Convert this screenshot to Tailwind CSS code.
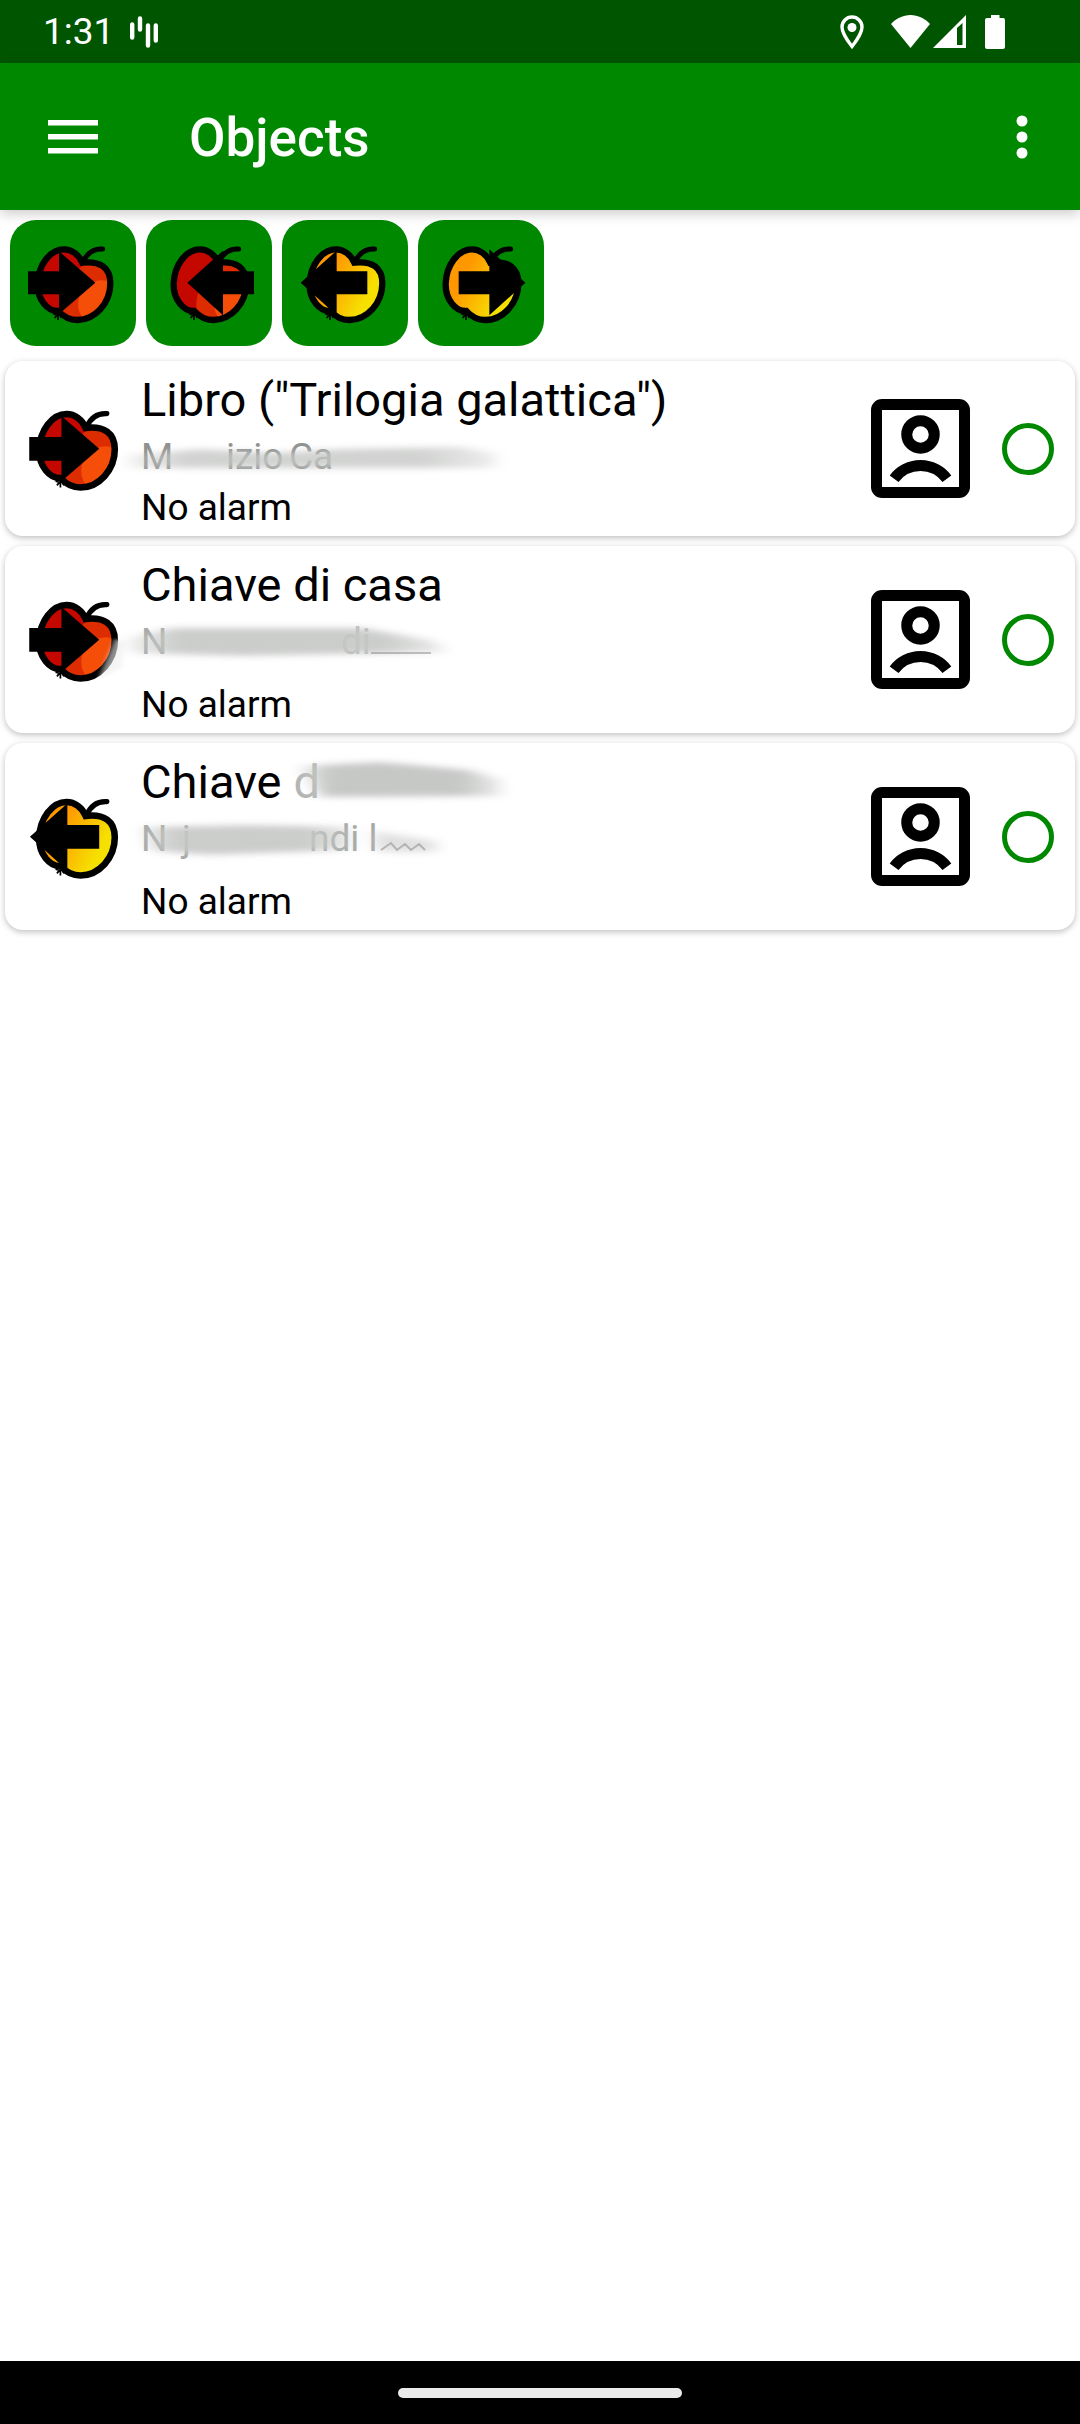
<!doctype html>
<html lang="en">
<head>
  <meta charset="UTF-8" />
  <meta name="viewport" content="width=device-width, initial-scale=1.0" />
  <title>Objects</title>
  <script src="https://cdn.jsdelivr.net/npm/@tailwindcss/browser@4"></script>
</head>
<body class="bg-white text-black font-['Roboto',sans-serif]">

<!-- Shared shapes -->
<svg class="absolute size-0" aria-hidden="true">
  <defs>
    <linearGradient id="gold" x1="0" y1="0" x2="1" y2="0.5">
      <stop offset="0.35" stop-color="#ff9800" />
      <stop offset="0.9" stop-color="#f6e000" />
    </linearGradient>
    <linearGradient id="smudge" x1="0" y1="0" x2="1" y2="0">
      <stop offset="0" stop-color="#c6c8c6" stop-opacity="0.3" />
      <stop offset="0.15" stop-color="#c6c8c6" />
      <stop offset="0.8" stop-color="#c6c8c6" />
      <stop offset="1" stop-color="#c6c8c6" stop-opacity="0.4" />
    </linearGradient>
    <filter id="smear" x="-20%" y="-60%" width="140%" height="220%">
      <feGaussianBlur stdDeviation="8 3" />
    </filter>
    <path id="apple-shape" d="M247 158C237 134 215 118 192 118C150 118 115 165 113 220C111 270 145 305 175 303C190 320 208 330 232 330C285 330 331 280 331 220C331 172 300 152 247 158Z" />
    <clipPath id="apple-clip"><use href="#apple-shape" /></clipPath>
    <g id="apple-lines">
      <use href="#apple-shape" fill="none" stroke="#000" stroke-width="19" />
      <path d="M249 156C260 132 280 115 308 117" fill="none" stroke="#000" stroke-width="15" stroke-linecap="round" />
      <path d="M160 312l10 3M164 324l8-10M174 330v-20M184 324l-6-12M190 320l-8-10" stroke="#000" stroke-width="5" />
    </g>
    <g id="apple-red">
      <g clip-path="url(#apple-clip)">
        <path d="M80 90H360V350H80Z" fill="#dd2c00" />
        <path d="M80 90H210L252 165C205 195 175 240 182 310H80Z" fill="#c40800" />
        <circle cx="305" cy="282" r="71" fill="#f44e08" />
      </g>
      <use href="#apple-lines" />
    </g>
    <g id="apple-gold">
      <use href="#apple-shape" fill="url(#gold)" />
      <use href="#apple-lines" />
    </g>
    <g id="contact" fill="none" stroke="#000" stroke-width="2">
      <rect x="4" y="4" width="16" height="16" rx="1" />
      <circle cx="12" cy="9.45" r="2.5" />
      <path d="M7.2 17.5A6 6 0 0 1 16.8 17.5" />
    </g>
  </defs>
</svg>

<div class="flex flex-col min-h-screen">
  <!-- Status bar -->
  <div class="flex items-center justify-between h-[63px] bg-[#005500] text-white pl-[43px] pr-[75px]">
    <div class="flex items-center gap-4">
      <span class="text-[37px] leading-[44px]">1:31</span>
      <svg class="w-7 h-8" viewBox="0 0 28 32" stroke="#fff" stroke-width="4.4" stroke-linecap="round">
        <path d="M2.2 8.500V21.500M10 2.500V13.500M18 9.500V29.500M25.800 9.500V24.500" />
      </svg>
    </div>
    <div class="flex items-center">
      <svg class="w-6 h-[34px] mr-[27px]" viewBox="0 0 24 34" fill="none">
        <path d="M12 2C6.500 2 2 6.500 2 12C2 19 12 31.500 12 31.500S22 19 22 12C22 6.500 17.500 2 12 2Z" stroke="#fff" stroke-width="3.4" />
        <circle cx="12" cy="12.500" r="4.500" fill="#fff" />
      </svg>
      <svg class="w-[39px] h-[33px] mr-[3px]" viewBox="0 0 39 33" fill="#fff"><path d="M19.500 33L0 9C5 3.500 12 0 19.500 0S34 3.500 39 9Z" /></svg>
      <svg class="w-[33px] h-[33px] mr-[19px]" viewBox="0 0 33 33" fill="#fff"><path fill-rule="evenodd" d="M33 0V33H0ZM24 13V30H29.500V8Z" /></svg>
      <svg class="w-5 h-[34px]" viewBox="0 0 20 34" fill="#fff"><path d="M6 0H14.500V3H18Q20 3 20 5V32Q20 34 18 34H2Q0 34 0 32V5Q0 3 2 3H6Z" /></svg>
    </div>
  </div>

  <!-- App bar -->
  <header class="relative flex items-center h-[147px] bg-[#008800] text-white pl-12 pr-[52px] shadow-[0_4px_12px_rgba(0,0,0,0.2)]">
    <button type="button" aria-label="Open menu">
      <svg class="w-[50px] h-[34px]" viewBox="0 0 50 34" fill="#fff"><path d="M0 0H50V5.500H0ZM0 14H50V19.500H0ZM0 28H50V33.500H0Z" /></svg>
    </button>
    <h1 class="flex-1 ml-[91px] pt-[3px] text-[53px] leading-[64px] font-medium">Objects</h1>
    <button type="button" aria-label="More options">
      <svg class="w-3 h-[44px]" viewBox="0 0 12 44" fill="#fff">
        <circle cx="6" cy="6" r="5.500" /><circle cx="6" cy="22" r="5.500" /><circle cx="6" cy="38" r="5.500" />
      </svg>
    </button>
  </header>

  <main class="flex-1">
    <!-- Actions -->
    <div class="flex gap-[10px] px-[10px] pt-[10px] pb-[15px]">
      <button type="button" aria-label="Lend" class="p-3 rounded-[26px] bg-[#008800]">
        <svg class="size-[102px]" viewBox="66 66 306 306"><use href="#apple-red" /><path d="M84 184H177V124L286 218L177 312V253H84Z" /></svg>
      </button>
      <button type="button" aria-label="Lent object returned" class="p-3 rounded-[26px] bg-[#008800]">
        <svg class="size-[102px]" viewBox="66 66 306 306"><use href="#apple-red" /><path d="M354 184H261V122L154 218L261 316V253H354Z" /></svg>
      </button>
      <button type="button" aria-label="Borrow" class="p-3 rounded-[26px] bg-[#008800]">
        <svg class="size-[102px]" viewBox="66 66 306 306"><use href="#apple-gold" /><path d="M286 184H194V122L86 218L194 316V253H286Z" /></svg>
      </button>
      <button type="button" aria-label="Borrowed object returned" class="p-3 rounded-[26px] bg-[#008800]">
        <svg class="size-[102px]" viewBox="66 66 306 306"><use href="#apple-gold" /><path d="M152 184H244V118L352 218L244 316V253H152Z" /></svg>
      </button>
    </div>

    <!-- Objects -->
    <ul class="flex flex-col gap-[10px] px-[5px]">
      <li class="flex items-center pl-[18px] pr-[21px] rounded-[18px] bg-white shadow-[0_2px_6px_rgba(0,0,0,0.25)]">
        <svg class="size-[106px]" viewBox="66 66 306 306"><use href="#apple-red" /><path d="M84 184H177V124L286 218L177 312V253H84Z" /></svg>
        <div class="flex-1 ml-3 pt-[11px] pb-[7px]">
          <h2 class="text-[47px] leading-[56px] mb-[7px]">Libro ("Trilogia galattica")</h2>
          <svg class="w-[400px] h-[43px] mb-2 overflow-visible text-[37px]" viewBox="0 0 400 43" aria-label="Name hidden">
            <g fill="#8f928f"><text x="0" y="34">M</text><text x="85" y="34">izio</text><text x="148" y="34">Ca</text></g>
            <path d="M-12 20L60 14L130 18L200 14L320 12L354 18V33H-12Z" fill="url(#smudge)" opacity="0.8" filter="url(#smear)" />
          </svg>
          <p class="text-[37px] leading-[43px]">No alarm</p>
        </div>
        <svg class="size-[99px] mr-8" viewBox="3 3 18 18"><use href="#contact" /></svg>
        <input type="radio" name="object" aria-label="Select Libro" class="appearance-none size-[52px] rounded-full border-[5px] border-[#008800] checked:bg-[#008800]" />
      </li>

      <li class="flex items-center pl-[18px] pr-[21px] rounded-[18px] bg-white shadow-[0_2px_6px_rgba(0,0,0,0.25)]">
        <svg class="size-[106px] overflow-visible" viewBox="66 66 306 306">
          <use href="#apple-red" /><path d="M84 184H177V124L286 218L177 312V253H84Z" />
          <path d="M332 215L360 225L350 300L285 330Z" fill="#eee" opacity="0.6" filter="url(#smear)" />
        </svg>
        <div class="flex-1 ml-3 pt-[11px] pb-[7px]">
          <h2 class="text-[47px] leading-[56px] mb-[7px]">Chiave di casa</h2>
          <svg class="w-[400px] h-[43px] mb-5 overflow-visible text-[37px]" viewBox="0 0 400 43" aria-label="Name hidden">
            <g fill="#a5a8a5"><text x="0" y="34">N</text><text x="200" y="34" fill="#b8bab8">di</text></g>
            <path d="M-12 18L30 8L220 8L290 20L306 32L100 36L-12 33Z" fill="url(#smudge)" opacity="0.9" filter="url(#smear)" />
            <path d="M230 33H290" stroke="#888" stroke-width="2" opacity="0.5" />
          </svg>
          <p class="text-[37px] leading-[43px]">No alarm</p>
        </div>
        <svg class="size-[99px] mr-8" viewBox="3 3 18 18"><use href="#contact" /></svg>
        <input type="radio" name="object" aria-label="Select Chiave di casa" class="appearance-none size-[52px] rounded-full border-[5px] border-[#008800] checked:bg-[#008800]" />
      </li>

      <li class="flex items-center pl-[18px] pr-[21px] rounded-[18px] bg-white shadow-[0_2px_6px_rgba(0,0,0,0.25)]">
        <svg class="size-[106px]" viewBox="66 66 306 306"><use href="#apple-gold" /><path d="M286 184H194V122L86 218L194 316V253H286Z" /></svg>
        <div class="flex-1 ml-3 pt-[11px] pb-[7px]">
          <h2 class="flex items-center text-[47px] leading-[56px] mb-[7px]">
            <span>Chiave</span>
            <span class="ml-3 text-[#b4b6b4]">d</span>
            <svg class="w-[190px] h-[56px] overflow-visible" viewBox="0 0 190 56" aria-label="Name hidden">
              <path d="M-20 12L60 8L150 16L180 26V42L0 43Z" fill="url(#smudge)" filter="url(#smear)" />
            </svg>
          </h2>
          <svg class="w-[400px] h-[43px] mb-5 overflow-visible text-[37px]" viewBox="0 0 400 43" aria-label="Name hidden">
            <g fill="#a5a8a5"><text x="0" y="34">N</text><text x="41" y="34">j</text><text x="168" y="34">ndi l</text></g>
            <path d="M0 10L110 8L210 10V33L70 38L10 34Z" fill="url(#smudge)" opacity="0.9" filter="url(#smear)" />
            <path d="M232 14L295 24V35H236Z" fill="#ccc" opacity="0.6" filter="url(#smear)" />
            <path d="M240 33l10-7 6 7 8-6 6 6 8-6 6 6" fill="none" stroke="#b4b4b4" stroke-width="2" />
          </svg>
          <p class="text-[37px] leading-[43px]">No alarm</p>
        </div>
        <svg class="size-[99px] mr-8" viewBox="3 3 18 18"><use href="#contact" /></svg>
        <input type="radio" name="object" aria-label="Select Chiave" class="appearance-none size-[52px] rounded-full border-[5px] border-[#008800] checked:bg-[#008800]" />
      </li>
    </ul>
  </main>

  <!-- Gesture bar -->
  <div class="flex items-center justify-center h-[63px] bg-black">
    <div class="w-[284px] h-[10px] rounded-full bg-[#ebebeb]"></div>
  </div>
</div>
</body>
</html>
